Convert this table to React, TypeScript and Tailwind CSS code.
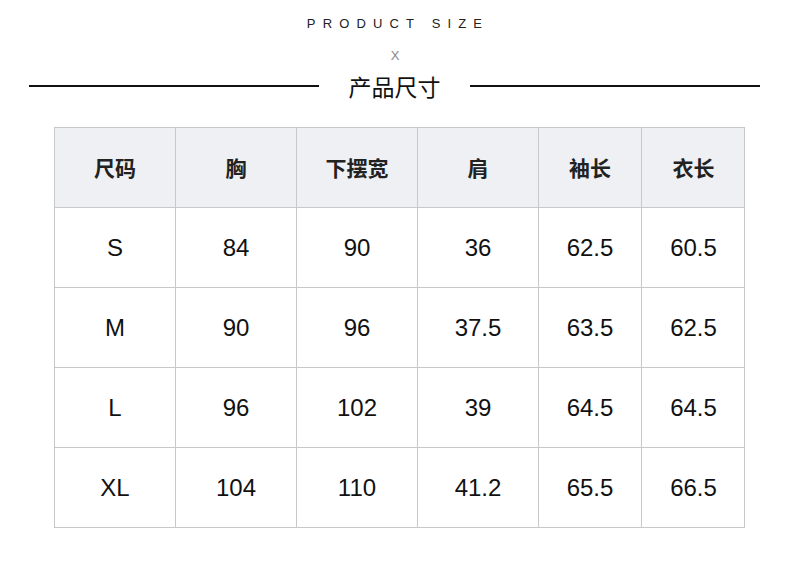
import React from 'react';

const HEADERS = ['尺码', '胸', '下摆宽', '肩', '袖长', '衣长'];
const ROWS = [
  ['S', '84', '90', '36', '62.5', '60.5'],
  ['M', '90', '96', '37.5', '63.5', '62.5'],
  ['L', '96', '102', '39', '64.5', '64.5'],
  ['XL', '104', '110', '41.2', '65.5', '66.5'],
];
const COL_W = ['w-[121px]', 'w-[121px]', 'w-[121px]', 'w-[121px]', 'w-[103px]', 'w-[103px]'];

export default function App() {
  return (
    <div className="w-[790px] h-[575px] bg-white overflow-hidden font-['Liberation_Sans','Noto_Sans_CJK_SC',sans-serif] text-black">
      <div className="pt-[17px] text-center text-[13px] leading-[14px] tracking-[0.55em] pl-[6px] text-[#222]">PRODUCT SIZE</div>
      <div className="mt-[18px] text-center text-[13px] leading-[14px] text-[#888] font-light">X</div>
      <div className="mt-[6px] flex items-center h-[34px]">
        <div className="ml-[29px] w-[290px] h-[2px] bg-[#111]" />
        <div className="flex-1 text-center text-[23px] leading-[34px] font-['Noto_Sans_CJK_SC',sans-serif] text-[#111]">产品尺寸</div>
        <div className="mr-[30px] w-[290px] h-[2px] bg-[#111]" />
      </div>
      <div className="mt-[24px] ml-[54px] w-[691px] border border-[#c8c8c8]">
        <div className="flex h-[79px] bg-[#eef0f3]">
          {HEADERS.map((h, i) => (
            <div
              key={h}
              className={`${COL_W[i]} shrink-0 flex items-center justify-center text-[21px] font-bold font-['Noto_Sans_CJK_SC',sans-serif] text-[#222] ${i < 5 ? 'border-r border-[#c8c8c8]' : ''}`}
            >
              {h}
            </div>
          ))}
        </div>
        {ROWS.map(row => (
          <div key={row[0]} className="flex h-[80px] border-t border-[#c8c8c8]">
            {row.map((c, i) => (
              <div
                key={i}
                className={`${COL_W[i]} shrink-0 flex items-center justify-center text-[24px] text-[#111] ${i < 5 ? 'border-r border-[#c8c8c8]' : ''}`}
              >
                {c}
              </div>
            ))}
          </div>
        ))}
      </div>
    </div>
  );
}
